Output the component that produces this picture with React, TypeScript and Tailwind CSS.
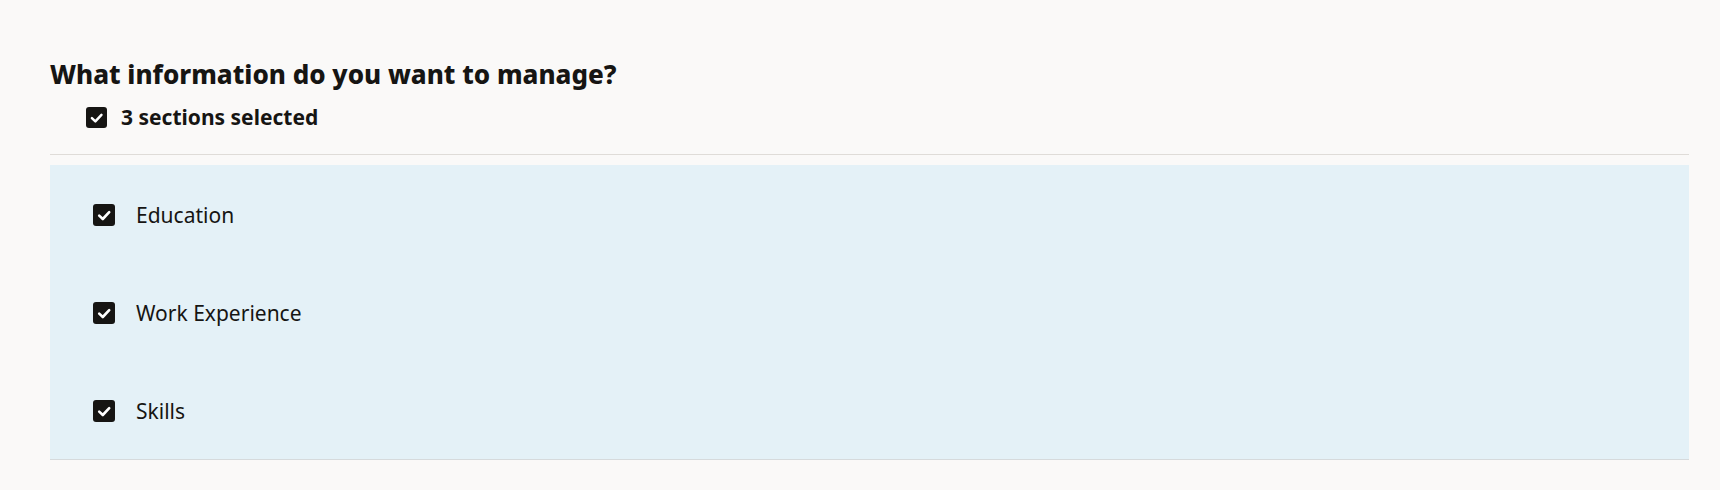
import React from "react";

// Small filled checkbox with a white tick
function CheckBox({ size = 22 }: { size?: number }) {
  return (
    <span
      className="inline-flex items-center justify-center rounded-[3px] bg-[#161513] shrink-0"
      style={{ width: size, height: size }}
    >
      <svg width={size} height={size} viewBox="0 0 22 22" fill="none">
        <path
          d="M6.2 11.6 L9.8 15 L16.2 8.2"
          stroke="#ffffff"
          strokeWidth="2.6"
          strokeLinecap="round"
          strokeLinejoin="round"
        />
      </svg>
    </span>
  );
}

const sections = ["Education", "Work Experience", "Skills"];

export default function App() {
  return (
    <div
      className="min-h-screen bg-[#faf9f8] pl-[50px] pr-[31px] pt-[57px] text-[#161513]"
      style={{ fontFamily: "'Noto Sans', 'Open Sans', sans-serif" }}
    >
      <h2 className="text-[26px] font-extrabold leading-[34px]">
        What information do you want to manage?
      </h2>

      <div className="flex items-center gap-[14px] ml-[36px] mt-[15px] h-[22px]">
        <CheckBox size={21} />
        <span className="text-[21px] font-bold leading-[22px]">3 sections selected</span>
      </div>

      <div className="mt-[26px] border-t border-[#dfdcd8]" />

      <div className="mt-[10px] bg-[#e4f1f7] border-b border-[#d6dadc]">
        {sections.map((s) => (
          <div key={s} className="flex items-center h-[98px] pl-[43px] gap-[21px] pt-[1px]">
            <CheckBox />
            <span className="text-[21px] leading-[24px]">{s}</span>
          </div>
        ))}
      </div>
    </div>
  );
}
